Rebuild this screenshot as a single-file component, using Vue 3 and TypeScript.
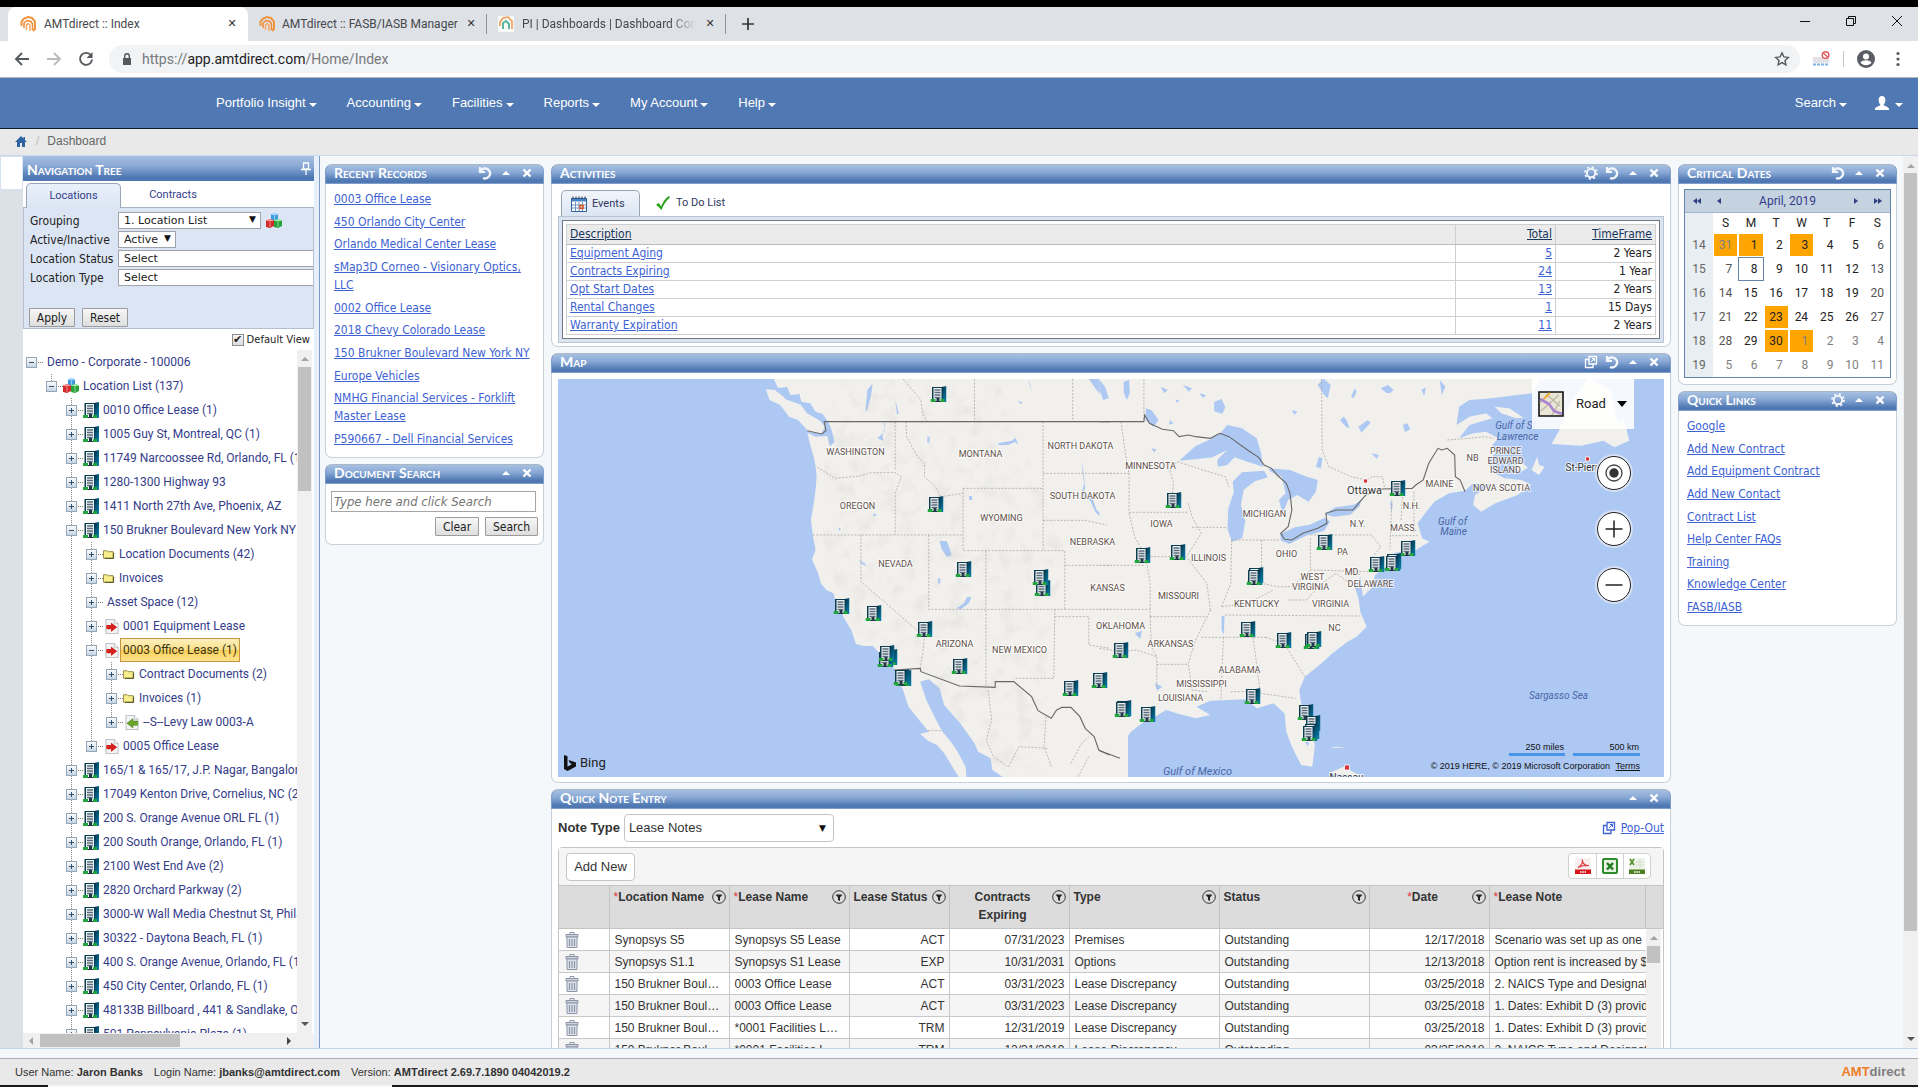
<script setup lang="ts">
import { ref } from 'vue'

interface TreeRow {
  level: number
  label: string
  open?: boolean
  icon?: 'building' | 'cubes' | 'folder' | 'lease-in' | 'lease-out'
  selected?: boolean
  last?: boolean
}

const topMenu = ['Portfolio Insight', 'Accounting', 'Facilities', 'Reports', 'My Account', 'Help']

const tree: TreeRow[] = [
  { level: 0, label: 'Demo - Corporate - 100006', open: true, last: true },
  { level: 1, label: 'Location List (137)', open: true, icon: 'cubes', last: true },
  { level: 2, label: '0010 Office Lease (1)', icon: 'building' },
  { level: 2, label: '1005 Guy St, Montreal, QC (1)', icon: 'building' },
  { level: 2, label: '11749 Narcoossee Rd, Orlando, FL (1)', icon: 'building' },
  { level: 2, label: '1280-1300 Highway 93', icon: 'building' },
  { level: 2, label: '1411 North 27th Ave, Phoenix, AZ', icon: 'building' },
  { level: 2, label: '150 Brukner Boulevard New York NY', open: true, icon: 'building' },
  { level: 3, label: 'Location Documents (42)', icon: 'folder' },
  { level: 3, label: 'Invoices', icon: 'folder' },
  { level: 3, label: 'Asset Space (12)' },
  { level: 3, label: '0001 Equipment Lease', icon: 'lease-in' },
  { level: 3, label: '0003 Office Lease (1)', open: true, icon: 'lease-in', selected: true },
  { level: 4, label: 'Contract Documents (2)', icon: 'folder' },
  { level: 4, label: 'Invoices (1)', icon: 'folder' },
  { level: 4, label: '--S--Levy Law 0003-A', icon: 'lease-out', last: true },
  { level: 3, label: '0005 Office Lease', icon: 'lease-in', last: true },
  { level: 2, label: '165/1 & 165/17, J.P. Nagar, Bangalore', icon: 'building' },
  { level: 2, label: '17049 Kenton Drive, Cornelius, NC (2)', icon: 'building' },
  { level: 2, label: '200 S. Orange Avenue ORL FL (1)', icon: 'building' },
  { level: 2, label: '200 South Orange, Orlando, FL (1)', icon: 'building' },
  { level: 2, label: '2100 West End Ave (2)', icon: 'building' },
  { level: 2, label: '2820 Orchard Parkway (2)', icon: 'building' },
  { level: 2, label: '3000-W Wall Media Chestnut St, Phila', icon: 'building' },
  { level: 2, label: '30322 - Daytona Beach, FL (1)', icon: 'building' },
  { level: 2, label: '400 S. Orange Avenue, Orlando, FL (1)', icon: 'building' },
  { level: 2, label: '450 City Center, Orlando, FL (1)', icon: 'building' },
  { level: 2, label: '48133B Billboard , 441 & Sandlake, Or', icon: 'building' },
  { level: 2, label: '501 Pennsylvania Plaza (1)', icon: 'building' },
]

const recentRecords = [
  '0003 Office Lease', '450 Orlando City Center', 'Orlando Medical Center Lease',
  'sMap3D Corneo - Visionary Optics, LLC', '0002 Office Lease', '2018 Chevy Colorado Lease',
  '150 Brukner Boulevard New York NY', 'Europe Vehicles',
  'NMHG Financial Services - Forklift Master Lease', 'P590667 - Dell Financial Services',
]

const quickLinks = [
  'Google', 'Add New Contract', 'Add Equipment Contract', 'Add New Contact', 'Contract List',
  'Help Center FAQs', 'Training', 'Knowledge Center', 'FASB/IASB',
]

const activities = [
  { name: 'Equipment Aging', total: 5, frame: '2 Years' },
  { name: 'Contracts Expiring', total: 24, frame: '1 Year' },
  { name: 'Opt Start Dates', total: 13, frame: '2 Years' },
  { name: 'Rental Changes', total: 1, frame: '15 Days' },
  { name: 'Warranty Expiration', total: 11, frame: '2 Years' },
]

const weekDays = ['S', 'M', 'T', 'W', 'T', 'F', 'S']
const due = ['0-0', '0-1', '0-3', '3-2', '4-2', '4-3']
const firstDay = new Date(2019, 2, 31)
const weeks = Array.from({ length: 6 }, (_, w) => ({
  number: 14 + w,
  days: Array.from({ length: 7 }, (_, d) => {
    const date = new Date(firstDay.getFullYear(), firstDay.getMonth(), firstDay.getDate() + w * 7 + d)
    return {
      day: date.getDate(),
      other: date.getMonth() !== 3,
      weekend: d === 0 || d === 6,
      due: due.includes(`${w}-${d}`),
      today: w === 1 && d === 1,
    }
  }),
}))

const noteColumns = [
  { title: 'Location Name', required: true, filter: true },
  { title: 'Lease Name', required: true, filter: true },
  { title: 'Lease Status', filter: true },
  { title: 'Contracts Expiring', filter: true, center: true },
  { title: 'Type', filter: true },
  { title: 'Status', filter: true },
  { title: 'Date', required: true, filter: true, center: true },
  { title: 'Lease Note', required: true },
]
const notes = [
  ['Synopsys S5', 'Synopsys S5 Lease', 'ACT', '07/31/2023', 'Premises', 'Outstanding', '12/17/2018', 'Scenario was set up as one'],
  ['Synopsys S1.1', 'Synopsys S1 Lease', 'EXP', '10/31/2031', 'Options', 'Outstanding', '12/13/2018', 'Option rent is increased by $'],
  ['150 Brukner Boulevard', '0003 Office Lease', 'ACT', '03/31/2023', 'Lease Discrepancy', 'Outstanding', '03/25/2018', '2. NAICS Type and Designat'],
  ['150 Brukner Boulevard', '0003 Office Lease', 'ACT', '03/31/2023', 'Lease Discrepancy', 'Outstanding', '03/25/2018', '1. Dates: Exhibit D (3) provid'],
  ['150 Brukner Boulevard', '*0001 Facilities Lease', 'TRM', '12/31/2019', 'Lease Discrepancy', 'Outstanding', '03/25/2018', '1. Dates: Exhibit D (3) provid'],
  ['150 Brukner Boulevard', '*0001 Facilities Lease', 'TRM', '12/31/2019', 'Lease Discrepancy', 'Outstanding', '03/25/2018', '2. NAICS Type and Designat'],
]

const stateLabels: [string, number, number][] = [
  ['WASHINGTON', 856, 455], ['MONTANA', 981, 457], ['NORTH DAKOTA', 1081, 449], ['MINNESOTA', 1151, 469],
  ['OREGON', 858, 509], ['WYOMING', 1002, 521], ['SOUTH DAKOTA', 1083, 499], ['NEBRASKA', 1093, 545],
  ['NEVADA', 896, 567], ['IOWA', 1162, 527], ['ILLINOIS', 1209, 561], ['MICHIGAN', 1265, 517],
  ['KANSAS', 1108, 591], ['MISSOURI', 1179, 599], ['OHIO', 1287, 557], ['PA', 1343, 555],
  ['WEST', 1313, 580], ['VIRGINIA', 1311, 590], ['KENTUCKY', 1257, 607], ['VIRGINIA', 1331, 607],
  ['ARIZONA', 955, 647], ['NEW MEXICO', 1020, 653], ['OKLAHOMA', 1121, 629], ['ARKANSAS', 1171, 647],
  ['NC', 1335, 631], ['ALABAMA', 1240, 673], ['MISSISSIPPI', 1202, 687], ['LOUISIANA', 1181, 701],
  ['N.Y.', 1358, 527], ['N.H.', 1412, 509], ['MASS.', 1404, 531], ['MD.', 1353, 575], ['DELAWARE', 1371, 587],
  ['MAINE', 1440, 487], ['NB', 1473, 461], ['PRINCE', 1506, 454], ['EDWARD', 1506, 464], ['ISLAND', 1506, 473],
  ['NOVA SCOTIA', 1502, 491],
]
const seaLabels: [string, number, number][] = [
  ['Gulf of St', 1516, 429], ['Lawrence', 1518, 440], ['Gulf of', 1453, 525], ['Maine', 1454, 535],
  ['Sargasso Sea', 1559, 699],
]
const pins: [number, number][] = [
  [939, 394], [936, 504], [964, 569], [1043, 588], [1041, 577], [842, 606], [874, 613], [925, 629],
  [890, 657], [886, 659], [887, 653], [904, 678], [902, 677], [960, 666], [1071, 688], [1100, 680], [1174, 500],
  [1143, 555], [1178, 552], [1256, 575], [1255, 577], [1325, 542], [1398, 488], [1408, 548], [1394, 561],
  [1393, 563], [1377, 564], [1248, 629], [1284, 640], [1312, 641], [1314, 639], [1121, 650], [1124, 708], [1123, 709],
  [1148, 714], [1253, 696], [1306, 712], [1313, 723], [1312, 731], [1310, 733],
]

const grouping = ref('1. Location List')
const active = ref('Active')
const locStatus = ref('Select')
const locType = ref('Select')
const defaultView = ref(true)
const noteType = ref('Lease Notes')
const query = ref('')
</script>

<template>
  <svg class="defs" aria-hidden="true">
    <defs>
      <linearGradient id="side" x1="0" x2="1" y1="0" y2="1"><stop offset="0" stop-color="#03293c" /><stop offset="1" stop-color="#0a86b4" /></linearGradient>
      <linearGradient id="cell" x1="0" x2="0" y1="0" y2="1"><stop offset="0" stop-color="#ffffff" /><stop offset="1" stop-color="#c4d3e2" /></linearGradient>
    </defs>
    <symbol id="building" viewBox="0 0 16 16">
      <path d="M1.500 1h10v15h-10z" fill="#0f3d50" /><path d="M11 1 16 0v16h-5z" fill="url(#side)" />
      <path d="M3 2h8v13H3z" fill="#eef2f5" />
      <path d="M4 4h6M4 6.500h6M4 9h6M4 11.500h6" stroke="#5b6d7b" stroke-width="1.300" />
      <path d="M6 12h3v4H6z" fill="#243746" />
      <path d="M0 13h5v3H0zM10 13h4v3h-4z" fill="#22a53c" />
    </symbol>
    <symbol id="cubes" viewBox="0 0 16 16">
      <path d="M5 1.500 8.500 0 12 1.500V7L8.500 8 5 7z" fill="#3d9be0" /><path d="m5 1.500 3.500 1L12 1.500 8.500 0z" fill="#a9dcff" />
      <path d="m0 7.500 4-1.500 4 1.500v5.500l-4 2-4-1z" fill="#d42a2a" /><path d="m0 7.500 4 1 4-1L4 6z" fill="#ff9c9c" />
      <path d="m8 7.500 4-1.500 4 1.500V13l-4 2-4-1z" fill="#25a53a" /><path d="m8 7.500 4 1 4-1L12 6z" fill="#a4efaa" />
      <path d="M8.500 3v4M4 9v5M12 9v5" stroke="#fff" stroke-opacity=".5" />
    </symbol>
    <symbol id="folder" viewBox="0 0 13 10">
      <path d="M.5 1.500h4l1 1H11v7H.5z" fill="#f7ee8c" stroke="#8d8434" /><path d="M11.500 3.500v6.300H2" fill="none" stroke="#4f4a1c" />
    </symbol>
    <symbol id="lease-in" viewBox="0 0 14 16">
      <path d="M.5.500h9l4 4v11H.5z" fill="#f4f4f6" stroke="#b9bcc4" /><path d="M9.500.500v4h4" fill="#fff" stroke="#b9bcc4" />
      <path d="M1 6.500h5V3.800l6.500 5-6.500 5V11H1z" fill="#d3221f" />
    </symbol>
    <symbol id="lease-out" viewBox="0 0 14 16">
      <path d="M.5.500h9l4 4v11H.5z" fill="#f4f4f6" stroke="#b9bcc4" /><path d="M9.500.500v4h4" fill="#fff" stroke="#b9bcc4" />
      <path d="M13 6.500H8V3.800l-6.500 5 6.500 5V11h5z" fill="#6aa62c" stroke="#4d8320" stroke-width=".6" />
    </symbol>
    <symbol id="undo" viewBox="0 0 14 14">
      <path d="M2 1v5h5" fill="none" stroke="#f3f6fb" stroke-width="2.200" /><path d="M3 4.500A5 5 0 1 1 5 12" fill="none" stroke="#f3f6fb" stroke-width="2.400" />
    </symbol>
    <symbol id="up" viewBox="0 0 14 14"><path d="M3 9 7 5l4 4z" fill="#fff" /></symbol>
    <symbol id="close" viewBox="0 0 14 14"><path d="m3.500 3.500 7 7m0-7-7 7" stroke="#fff" stroke-width="2.400" /></symbol>
    <symbol id="gear" viewBox="0 0 14 14">
      <circle cx="7" cy="7" r="4.200" fill="none" stroke="#f3f6fb" stroke-width="2" />
      <circle cx="7" cy="7" r="6" fill="none" stroke="#f3f6fb" stroke-width="1.800" stroke-dasharray="2.200 2.512" />
    </symbol>
    <symbol id="popout" viewBox="0 0 14 14">
      <path d="M5 1.500h7.500V9H5zM5 4.500H1.500v8H9V9" fill="none" stroke="currentColor" stroke-width="1.300" />
      <path d="m7 7 3.500-3.500M8 3.500h2.500V6" fill="none" stroke="currentColor" />
    </symbol>
    <symbol id="amt" viewBox="0 0 16 16">
      <path d="M1.500 10V5.500L4 2.500 8 1l4 1 3 3.500V13l-2 2" fill="none" stroke="#f0953f" stroke-width="2" />
      <path d="M4 12V7l3-2.500 4 1 1.500 2.500v6" fill="none" stroke="#ee8a33" stroke-width="1.500" />
      <path d="M6.500 14V9L8 7.500 10 9v6" fill="none" stroke="#f4a75e" stroke-width="1.500" />
    </symbol>
    <symbol id="trash" viewBox="0 0 14 16">
      <path d="M1 2.500h12V5H1z" fill="#cfd4de" stroke="#8c95a8" /><path d="M5 2.500V.500h4v2" fill="none" stroke="#8c95a8" />
      <path d="M2 5h10v10.500H2z" fill="#dde1e9" stroke="#8c95a8" /><path d="M4.500 7v7M7 7v7M9.500 7v7" stroke="#8c95a8" stroke-width="1.200" />
    </symbol>
    <symbol id="filter" viewBox="0 0 14 14">
      <circle cx="7" cy="7" r="6.300" fill="none" stroke="#333" /><path d="M3.500 4.500h7L8 7.500V11L6 10V7.500z" fill="#222" />
    </symbol>
  </svg>

  <div class="window">
    <div class="strip"></div>
    <div class="tabs">
      <div class="tab current">
        <svg class="i16"><use href="#amt" /></svg><span class="tab-title">AMTdirect :: Index</span><button class="tab-x" aria-label="Close tab">✕</button>
      </div>
      <div class="tab second">
        <svg class="i16"><use href="#amt" /></svg><span class="tab-title">AMTdirect :: FASB/IASB Manager</span><button class="tab-x" aria-label="Close tab">✕</button>
      </div>
      <div class="tab third">
        <svg class="i16 pale" viewBox="0 0 16 16"><path d="M2 10V6l3-4 5-1 4 4v8" fill="none" stroke="#ef9a52" stroke-width="1.600" /><path d="M5 13V7l3-2 3 3v5" fill="none" stroke="#5fb59b" stroke-width="2" /></svg>
        <span class="tab-title fade">PI | Dashboards | Dashboard Con</span><button class="tab-x" aria-label="Close tab">✕</button>
      </div>
      <button class="new-tab" aria-label="New tab"><svg viewBox="0 0 12 12"><path d="M6 0v12M0 6h12" stroke="#333" stroke-width="1.700" /></svg></button>
      <div class="win-buttons">
        <button aria-label="Minimise"><svg viewBox="0 0 12 12"><path d="M1 6.500h10" stroke="#111" /></svg></button>
        <button aria-label="Restore"><svg viewBox="0 0 12 12"><path d="M1.500 3.500h7v7h-7zM3.500 3V1.500h7v7H9" fill="none" stroke="#111" /></svg></button>
        <button aria-label="Close"><svg viewBox="0 0 12 12"><path d="m1 1 10 10m0-10L1 11" stroke="#111" /></svg></button>
      </div>
    </div>

    <div class="toolbar">
      <button aria-label="Back"><svg viewBox="0 0 16 16"><path d="M15 8H2M8 2 2 8l6 6" fill="none" stroke="#55585d" stroke-width="1.900" /></svg></button>
      <button aria-label="Forward"><svg viewBox="0 0 16 16"><path d="M1 8h13M8 2l6 6-6 6" fill="none" stroke="#b9bbbf" stroke-width="1.900" /></svg></button>
      <button aria-label="Reload"><svg viewBox="0 0 16 16"><path d="M13 4.500A6 6 0 1 0 14 8.500" fill="none" stroke="#55585d" stroke-width="1.900" /><path d="M14.500 1v6h-6z" fill="#55585d" /></svg></button>
      <div class="address">
        <svg class="lock" viewBox="0 0 10 13"><path d="M1 5h8v7H1z" fill="#55585d" /><path d="M2.700 5V3a2.300 2.300 0 0 1 4.600 0v2" fill="none" stroke="#55585d" stroke-width="1.400" /></svg>
        <span>https://<b>app.amtdirect.com</b>/Home/Index</span>
        <svg class="star" viewBox="0 0 16 16"><path d="m8 1.800 1.900 4.100 4.400.5-3.300 3 .9 4.500L8 11.600l-3.900 2.300.9-4.500-3.300-3 4.400-.5z" fill="none" stroke="#55585d" stroke-width="1.400" /></svg>
      </div>
      <svg class="ext" viewBox="0 0 18 16"><path d="M0 6h16v6H0z" fill="#e3e3e5" /><path d="M0 13.500h16" stroke="#7cb3ea" stroke-width="2" stroke-dasharray="3 1" /><circle cx="12.500" cy="4" r="3.300" fill="#fff" stroke="#dd5a5a" stroke-width="1.400" /><path d="m10.300 2 4.300 4" stroke="#dd5a5a" stroke-width="1.400" /></svg>
      <span class="tool-sep"></span>
      <svg class="avatar" viewBox="0 0 18 18"><circle cx="9" cy="9" r="9" fill="#5a5d63" /><circle cx="9" cy="6.500" r="3" fill="#fff" /><path d="M3.500 12.500c2-3 9-3 11 0-2 3.500-9 3.500-11 0z" fill="#fff" /></svg>
      <svg class="dots" viewBox="0 0 4 16"><circle cx="2" cy="2.500" r="1.600" fill="#55585d" /><circle cx="2" cy="8" r="1.600" fill="#55585d" /><circle cx="2" cy="13.500" r="1.600" fill="#55585d" /></svg>
    </div>

    <nav class="menu">
      <a v-for="m in topMenu" :key="m" href="#">{{ m }}<i class="caret"></i></a>
      <a href="#" class="push">Search<i class="caret"></i></a>
      <a href="#" aria-label="Account" class="user"><svg viewBox="0 0 14 14"><path d="M7 0c2.400 0 3.400 1.700 3.400 4S9.300 8 8.600 8.700c0 1.600 5.400 1.500 5.400 4.300v1H0v-1c0-2.800 5.400-2.700 5.400-4.300C4.700 8 3.600 6.300 3.600 4S4.600 0 7 0z" fill="#fff" /></svg><i class="caret"></i></a>
    </nav>

    <div class="crumbs">
      <a href="#" aria-label="Home"><svg viewBox="0 0 12 11"><path d="M6 0 0 6h2v5h3V7h2v4h3V6h2l-2-2V1H8.500v1.500z" fill="#2f64a3" /></svg></a>
      <span class="slash">/</span><span>Dashboard</span>
    </div>

    <main>
      <div class="rail"><div></div></div>
      <aside>
        <div class="aside-head"><h2>Navigation Tree</h2><button aria-label="Pin"><svg viewBox="0 0 10 14"><path d="M2.500 1h5v6h-5zM0 7.500h10M5 8v5" fill="none" stroke="#fff" stroke-width="1.300" /></svg></button></div>
        <div class="aside-tabs"><button class="on">Locations</button><button>Contracts</button></div>
        <form class="filters" @submit.prevent>
          <div class="frow"><label for="grp">Grouping</label><span class="sel w143"><select id="grp" v-model="grouping"><option>1. Location List</option></select></span><svg class="i16 cub"><use href="#cubes" /></svg></div>
          <div class="frow"><label for="act">Active/Inactive</label><span class="sel w58"><select id="act" v-model="active"><option>Active</option></select></span></div>
          <div class="frow"><label for="ls">Location Status</label><input id="ls" v-model="locStatus" /></div>
          <div class="frow"><label for="lt">Location Type</label><input id="lt" v-model="locType" /></div>
          <div class="fbtns"><button class="btn">Apply</button><button class="btn">Reset</button></div>
        </form>
        <label class="dview"><input v-model="defaultView" type="checkbox" />Default View</label>
        <div class="tree-area">
          <ul class="tree">
            <li v-for="(r, n) in tree" :key="n">
              <span v-for="l in r.level + 1" :key="l" class="cell" :class="{ guide: l - 1 >= 2 && !(l - 1 === r.level && r.last), half: l - 1 === r.level && r.last && r.level > 0 }">
                <svg v-if="l - 1 === r.level" class="toggle" viewBox="0 0 17 11"><rect x=".5" y=".5" width="10" height="10" fill="url(#cell)" stroke="#93a7b8" /><path :d="r.open ? 'M3 5.500h5' : 'M3 5.500h5M5.500 3v5'" stroke="#31506e" /><path d="M12 5.500h5" stroke="#777" stroke-dasharray="1 1" /></svg>
              </span>
              <svg v-if="r.icon" class="ticon" :class="r.icon"><use :href="'#' + r.icon" /></svg>
              <a href="#" :class="{ selected: r.selected }">{{ r.label }}</a>
            </li>
          </ul>
          <div class="vbar tree-v"><i class="arr up"></i><div class="thumb"></div><i class="arr down dark"></i></div>
        </div>
        <div class="hbar"><i class="arr left"></i><div class="thumb"></div><i class="arr right"></i></div>
      </aside>
      <div class="splitter"></div>

      <div class="board">
        <div class="col narrow">
          <section class="portlet">
            <header><h2>Recent Records</h2><button aria-label="Refresh"><svg><use href="#undo" /></svg></button><button aria-label="Collapse"><svg><use href="#up" /></svg></button><button aria-label="Close"><svg><use href="#close" /></svg></button></header>
            <ul class="links recent"><li v-for="t in recentRecords" :key="t"><a href="#">{{ t }}</a></li></ul>
          </section>
          <section class="portlet">
            <header><h2>Document Search</h2><button aria-label="Collapse"><svg><use href="#up" /></svg></button><button aria-label="Close"><svg><use href="#close" /></svg></button></header>
            <form class="docs" @submit.prevent>
              <input v-model="query" aria-label="Document search" placeholder="Type here and click Search" />
              <div><button class="btn">Clear</button><button class="btn wide">Search</button></div>
            </form>
          </section>
        </div>

        <div class="col wide-col">
          <section class="portlet">
            <header><h2>Activities</h2><button aria-label="Settings"><svg><use href="#gear" /></svg></button><button aria-label="Refresh"><svg><use href="#undo" /></svg></button><button aria-label="Collapse"><svg><use href="#up" /></svg></button><button aria-label="Close"><svg><use href="#close" /></svg></button></header>
            <div class="acts">
              <div class="act-tabs">
                <button class="on"><svg viewBox="0 0 16 16"><path d="M.5 2.500h15v13H.5z" fill="#fff" stroke="#2d5c99" /><path d="M1 3h14v2.500H1z" fill="#4b82c8" /><path d="M1 9h14M1 12h14M4.500 6v9M8 6v9M11.500 6v9" stroke="#6d94c4" /><path d="M2 .500v2M5 .500v2M8 .500v2M11 .500v2M14 .500v2" stroke="#333" /><path d="M9 9.500h3v3H9z" fill="none" stroke="#d9531e" stroke-width="1.500" /></svg>Events</button>
                <button><svg viewBox="0 0 16 16"><path d="M1 9.500 4 8l2 3.500Q9 4 14 1l1 1.500Q9.500 7 6.500 15z" fill="#2aa31c" /></svg>To Do List</button>
              </div>
              <div class="frame"><div class="inner">
                <table>
                  <thead><tr><th><a href="#">Description</a></th><th class="n"><a href="#">Total</a></th><th class="n"><a href="#">TimeFrame</a></th></tr></thead>
                  <tbody><tr v-for="a in activities" :key="a.name"><td><a href="#">{{ a.name }}</a></td><td class="n"><a href="#">{{ a.total }}</a></td><td class="n">{{ a.frame }}</td></tr></tbody>
                </table>
              </div></div>
            </div>
          </section>

          <section class="portlet">
            <header><h2>Map</h2><button aria-label="Pop out"><svg><use href="#popout" /></svg></button><button aria-label="Refresh"><svg><use href="#undo" /></svg></button><button aria-label="Collapse"><svg><use href="#up" /></svg></button><button aria-label="Close"><svg><use href="#close" /></svg></button></header>
            <div class="map">
              <svg class="canvas" viewBox="558 379 1107 398" preserveAspectRatio="xMidYMid slice">
                <filter id="relief" x="0" y="0" width="100%" height="100%"><feTurbulence type="fractalNoise" baseFrequency=".06" numOctaves="3" seed="4" /><feColorMatrix values="0 0 0 0 .45  0 0 0 0 .45  0 0 0 0 .42  1.200 0 0 0 -.58" /><feComposite in2="SourceGraphic" operator="in" /></filter>
                <g transform="translate(550 370) scale(.35714 .33333)">
                  <path fill="#f1f0ed" d="M625 20 640 55 665 50 675 75 700 72 705 95 730 100 745 125 765 132 780 155 790 180 798 215 785 230 778 198 745 200 722 188 730 225 740 262 745 290 748 320 745 360 740 400 732 450 738 500 745 540 735 568 752 610 760 640 775 660 795 670 800 690 815 715 825 745 845 780 858 822 880 828 905 828 925 850 948 880 965 895 975 930 990 960 1005 1010 1035 1050 1062 1085 1038 1092 1060 1112 1085 1125 1105 1150 1125 1185 1148 1225H1168L1165 1190 1140 1140 1120 1110 1100 1085 1080 1045 1055 990 1038 935 1062 928 1092 955 1105 1005 1150 1060 1190 1120 1200 1145 1235 1165 1240 1200 1275 1225H1620V20z" />
                  <path fill="#f1f0ed" d="m606 58 25 2 30 25 40 15 20 30 35 20 15 20-10 22-35-7-30-35-25-10-25-35-30-15z" />
                  <path d="M640 55 665 85 705 100 735 132 770 155" fill="none" stroke="#adc8f2" stroke-width="9" />
                  <g fill="#adc8f2"><path d="m1092 512 20 2 8 20 6 22-14 5-14-25zM1140 715l20-15 10-20 12 2-8 18-22 18zM1255 220l40-8 10-8 8 20-10-8-18 8-25 2zM1490 275l5 30 5 50-8 15 30 20 10 30 25 25 2 12-30-30-15-35-25-20 8-30-5-40zM890 60l15-20-5 40-12 45-3-5zM968 90l5 45 5-5zM1512 30l30 45 28 10V20h-60zM936 155l2 30-20 20 18 8-4-12 8-40zM1088 625h6v15h-6zM1058 200h6v18h-6zM905 430l12 4-8 6zM1340 30l10 32-4-20zM808 472l8 4-4 8zM865 570l16 8 8 12-16-10zM1175 378h8v12h-8zM1312 92l14 6-8 4z" /></g>
                </g>
                <g transform="translate(1100 370) scale(.36996 .33333)">
                  <path fill="#f1f0ed" d="M0 20V1225H35L42 1165 55 1130 85 1085 120 1055 150 1040 180 1020 215 1032 260 1045 300 1035 262 1010 300 992 350 990 395 988 425 1015 470 1000 500 1030 505 1085 520 1130 545 1185 575 1190 582 1130 575 1060 545 1000 540 960 555 920 600 880 630 850 670 815 695 800 722 770 705 725 700 685 690 650 705 620 712 680 735 655 745 615 775 590 780 560 800 548 855 540 892 515 872 505 860 460 880 430 905 395 945 370 988 362 1010 340 1060 345 1015 375 1010 405 1032 425 1070 400 1130 375 1168 345 1140 330 1095 325 1060 305 1050 270 1070 250 1062 225 1078 205 1045 185 1010 190 972 205 1000 165 1062 145 1045 130 1000 140 965 165 972 110 1000 90 1060 85 1130 75 1170 70 1195 20z" />
                  <path fill="#f1f0ed" d="m1068 110 40 5 38 28-20 2-40-15zM1168 300l15-40 5 25 15 5-15 25zM1120 290l20-15 18 18-18 12zM1222 222l20-40 30-80 50-80 60 40 20 100 15-20 15 70-40 20-30-20-60 15zM620 1135l20-5 30 2M620 1210l40-20 50 30z" />
                  <g fill="#adc8f2">
                    <path d="M215 272 260 228 300 208 328 188 345 165 385 175 425 205 437 250 442 290 400 275 365 262 345 285 320 290 318 270 345 240 305 262 260 268z" />
                    <path d="m360 335 25-28 60-5 10 20-35 12-30 25-8 45 12 50-8 50-28 12-12-40 2-60 15-50zM455 295l60 5 45 20 30 10-5 35-20 30-30-20-25 15-15 40-10-40 18-20-10-50-30-15zM488 492l40-20 40-8 40-20 15 10-15 28-50 15-45 25-22-10zM608 432l30-20 50-8 20-15-5 20-25 25-45 6z" />
                    <path d="m0 30 15 20 10 35-15 5L0 60zM65 35l15-5 2 40-8 20-8-20zM125 115l15 5 20 30-15 20-20-20zM310 95l20-8 10 25-8 20-22-8zM590 45l15-20 20 20-8 40-10-10zM650 150l10-10 8 10 8 25-10-5zM680 80l10-25 5 10-8 20zM760 55l20-10 15 15-10 10-10-2zM820 165l12-5 8 18-14 8zM585 290l8-30 10 5-5 30zM140 235l14 3-6 10zM225 45l25 10-8 10zM270 70l18 5-8 10zM165 50l20 10-10 10zM205 88l12 4-8 6zM190 150l10 10-12 4zM520 120l15 5-8 10zM700 170l25-20 8 8-25 30zM920 30l15 20-10 25zM870 60l12-8-4 25zM735 250l20 5-5 12zM330 740l8-5-2 60-6-15zM150 940l20 10-15 12zM95 790l20-8-5 25zM730 640l-12 50 2 30-6-20zM785 395l8 5-4 30zM555 1115l12 2-4 12z" />
                  </g>
                </g>
                <g filter="url(#relief)" opacity=".35"><path transform="translate(550 370) scale(.35714 .33333)" fill="#000" d="M800 20H1250L1450 560 1400 740 1380 1225H1275L1105 1000 1040 900 960 860 860 790 765 560 770 260z" /></g>
                <g fill="none" stroke="#b4b0ac" stroke-dasharray="2 1.500" stroke-width=".9">
                  <path vector-effect="non-scaling-stroke" transform="translate(550 370) scale(.35714 .33333)" d="M968 155V300M750 292l50 33 70-7 30-10h68l17 12-17 50v125M737 495h421M998 155l2 45 30 60 20 20v40l30 30 15 30 63-10M1158 355h224M1382 155v385M1158 355v187h285v176M1382 310h200M1382 451h118l60 14M1443 586h130M872 495v140l178 165-5 50-7 45M1062 495v223h510M1222 542v408M1415 718l-3 207h-112M1415 740h95v85l60 10M1190 27v128M1465 27v128M990 27l50 63 5 40 13 25M1228 960l10 90-15 60 20 50 40 30M1390 1040l-5 90 20 60M1285 1190l30-60 80 5M1060 1082h40M1460 1180l30-60 20-20M1480 1220l30-60" />
                  <path vector-effect="non-scaling-stroke" transform="translate(1100 370) scale(.36996 .33333)" d="M120 27v128M58 155l12 95 10 60v117M0 310h80M80 427h160M195 400l5-60-10-40 20-25 70 25 60 20 10 30M240 400l10 40 25 50-40 70 55 80 10 80M0 586h120M80 430l15 70 30 60 12 80v100M110 560h120M137 740h153M0 718h137M137 740l3 90 15 30v90M155 883h85M300 720l-40 90-20 70 10 80 40 5M275 802h175M340 735l370 3M335 802l-7 188M415 802l20 168 95 15M355 965h80M357 510l-2 130-25 70M357 510h133M438 510v130l42 10h40l50-50M570 505v95l160 5M570 495h165l25 35-20 30 10 40M790 390l-5 150M790 497h70M820 360l-5 90M850 365v125M600 27l2 213 18 50 60 30 40 10 20-10h25l5 30M940 210l60-5 40-5 25 5M450 802l50 20 55 98M330 710l70-10 70-40M510 690h50l40-50 40-30 60 50M250 472h95M0 835l60 10 40-5 55 20" />
                </g>
                <g fill="none" stroke="#6a6866" stroke-width="1.100">
                  <path vector-effect="non-scaling-stroke" transform="translate(550 370) scale(.35714 .33333)" d="M722 182l40 10 12-10-5-27H1570M965 900l73-5 2 10 108 43 100 4v-17h52l50 45 18 42 37 23 15-25 15-8h25l25 28 15 35 25 25 13 40 30 15" />
                  <path vector-effect="non-scaling-stroke" transform="translate(1100 370) scale(.36996 .33333)" d="M0 155h120l2-20 13 25 35 18 30 4 15 18 25-5 20 5 40 5 25-15 25 10 50 40 30 22 15 23 20 10 15 20 25 25 10 30 5 50-10 50-20 20 10 18 20 2 30-20 40-15 25-15-3-30 28-10h45l15-20 20-25 40-18 85-2 10-10 20-15 15-50 25-45 10 5 15-5 20 20 2 65 13 10 13 35M0 1142l30 12 25 11" />
                </g>
                <g class="st"><text v-for="(s, n) in stateLabels" :key="n" :x="s[1]" :y="s[2]">{{ s[0] }}</text></g>
                <g class="sea"><text v-for="s in seaLabels" :key="s[0]" :x="s[1]" :y="s[2]">{{ s[0] }}</text><text x="1198" y="775" class="big">Gulf of Mexico</text></g>
                <g fill="#d8343c" stroke="#fff" stroke-width=".8"><path d="M1364 479h4v4h-4zM1586 457h4v4h-4zM1345 765h5v5h-5z" /></g>
                <g class="city"><text x="1365" y="494">Ottawa</text><text x="1585" y="471" class="small">St-Pierre</text><text x="1347" y="781" class="small">Nassau</text></g>
                <use v-for="(p, n) in pins" :key="n" href="#building" :x="p[0] - 8" :y="p[1] - 8" width="16" height="16" />
              </svg>
              <button class="road"><svg viewBox="0 0 26 26"><path d="M1 1h24v24H1z" fill="#eae6d6" stroke="#111" stroke-width="1.600" /><path d="m3 20 18-16M8 3l14 12M14 24l8-14M2 12l8-9" stroke="#bdb8a4" stroke-width="1.400" /><path d="m6 8 6-6" stroke="#f0b13c" stroke-width="2" /><path d="m2 8 9 5 5 7 8 3" fill="none" stroke="#a983cf" stroke-width="2.600" /></svg>Road<i></i></button>
              <div class="zoomers">
                <button aria-label="Locate me"><svg viewBox="0 0 34 34"><circle cx="17" cy="17" r="8.500" fill="none" stroke="#444" stroke-width="1.400" /><circle cx="17" cy="17" r="5" fill="#333" /></svg></button>
                <button aria-label="Zoom in"><svg viewBox="0 0 34 34"><path d="M17 8v18M8 17h18" stroke="#222" stroke-width="1.600" /></svg></button>
                <button aria-label="Zoom out"><svg viewBox="0 0 34 34"><path d="M8 17h18" stroke="#222" stroke-width="1.600" /></svg></button>
              </div>
              <div class="bing"><svg viewBox="0 0 12 16"><path d="m0 0 3.500 1.200v10.500L8 9 5.800 8 4.500 5 12 7.600v3.800L3.500 16 0 14z" fill="#111" /></svg>Bing</div>
              <div class="legal"><div class="scales"><span class="mi">250 miles</span><span class="km">500 km</span></div><div>© 2019 HERE, © 2019 Microsoft Corporation <a href="#">Terms</a></div></div>
            </div>
          </section>

          <section class="portlet">
            <header><h2>Quick Note Entry</h2><button aria-label="Collapse"><svg><use href="#up" /></svg></button><button aria-label="Close"><svg><use href="#close" /></svg></button></header>
            <div class="notes">
              <div class="note-top">
                <label for="nt">Note Type</label>
                <span class="sel note-sel"><select id="nt" v-model="noteType"><option>Lease Notes</option></select></span>
                <a href="#" class="pop"><svg><use href="#popout" /></svg><span>Pop-Out</span></a>
              </div>
              <div class="grid">
                <div class="grid-bar">
                  <button class="add">Add New</button>
                  <div class="exports">
                    <button aria-label="Export to PDF"><svg viewBox="0 0 16 16"><path d="M0 0h16v16H0z" fill="#f6f0f0" /><path d="M0 11.500h16V16H0z" fill="#d8151b" /><path d="M3 9.500C7 7 8 4 7 1.500 8 6 11 8 14 7.500 10 7 6 8 3 9.500z" fill="none" stroke="#e0444a" stroke-width="1.200" /><path d="M5 14h6" stroke="#fff" stroke-dasharray="1.500 .8" stroke-width="1.500" /></svg></button>
                    <button aria-label="Export to Excel"><svg viewBox="0 0 16 16"><rect x="1" y="1" width="14" height="14" rx="1" fill="#e6f2df" stroke="#2f8a2c" stroke-width="2" /><path d="m5 5 6 6.500m0-6.500-6 6.500" stroke="#1e7a1e" stroke-width="2.400" /></svg></button>
                    <button aria-label="Export to CSV"><svg viewBox="0 0 16 16"><path d="M0 0h16v16H0z" fill="#eef3ea" /><path d="M0 11.500h16V16H0z" fill="#4d7f22" /><path d="m1 1 4 6m0-6L1 7" stroke="#4d8f22" stroke-width="1.500" /><path d="M7 4h8M7 7h8M11 1v10" stroke="#d5dfd0" /><path d="M5 14h6" stroke="#fff" stroke-dasharray="1.500 .8" stroke-width="1.500" /></svg></button>
                  </div>
                </div>
                <div class="grid-body">
                  <table>
                    <colgroup><col class="c50" /><col class="c120" /><col class="c120" /><col class="c100" /><col class="c120" /><col class="c150" /><col class="c150" /><col class="c120" /><col /></colgroup>
                    <thead><tr><th></th><th v-for="c in noteColumns" :key="c.title"><div :class="{ center: c.center }"><span><em v-if="c.required">*</em>{{ c.title }}</span><svg v-if="c.filter"><use href="#filter" /></svg></div></th></tr></thead>
                    <tbody><tr v-for="(row, n) in notes" :key="n"><td class="bin"><button aria-label="Delete note"><svg><use href="#trash" /></svg></button></td><td v-for="(v, k) in row" :key="k" :class="{ n: k === 2 || k === 3 || k === 6, clip: k === 7 }">{{ v }}</td></tr></tbody>
                  </table>
                  <div class="gside"><div class="ghead"></div><div class="vbar"><i class="arr up"></i><div class="thumb"></div></div></div>
                </div>
              </div>
            </div>
          </section>
        </div>

        <div class="col narrow">
          <section class="portlet">
            <header><h2>Critical Dates</h2><button aria-label="Refresh"><svg><use href="#undo" /></svg></button><button aria-label="Collapse"><svg><use href="#up" /></svg></button><button aria-label="Close"><svg><use href="#close" /></svg></button></header>
            <div class="cal">
              <div class="cal-head">
                <button aria-label="Previous year"><i></i><i></i></button><button class="month" aria-label="Previous month"><i></i></button><span>April, 2019</span><button class="fwd month" aria-label="Next month"><i></i></button><button class="fwd" aria-label="Next year"><i></i><i></i></button>
              </div>
              <table>
                <thead><tr><th class="wk"></th><th v-for="(d, n) in weekDays" :key="n">{{ d }}</th></tr></thead>
                <tbody><tr v-for="w in weeks" :key="w.number"><th class="wk">{{ w.number }}</th><td v-for="(d, n) in w.days" :key="n"><span :class="{ other: d.other, weekend: d.weekend, due: d.due, today: d.today }">{{ d.day }}</span></td></tr></tbody>
              </table>
            </div>
          </section>
          <section class="portlet">
            <header><h2>Quick Links</h2><button aria-label="Settings"><svg><use href="#gear" /></svg></button><button aria-label="Collapse"><svg><use href="#up" /></svg></button><button aria-label="Close"><svg><use href="#close" /></svg></button></header>
            <ul class="links quick"><li v-for="t in quickLinks" :key="t"><a href="#">{{ t }}</a></li></ul>
          </section>
        </div>
      </div>
      <div class="vbar page-v"><i class="arr up"></i><div class="thumb"></div><i class="arr down dark"></i></div>
    </main>
    <div class="gap"></div>
    <footer>
      <span>User Name: <b>Jaron Banks</b></span><span>Login Name: <b>jbanks@amtdirect.com</b></span><span>Version: <b>AMTdirect 2.69.7.1890 04042019.2</b></span>
      <b class="brand"><span>AMT</span>direct</b>
    </footer>
    <div class="taskbar"><div></div></div>
  </div>
</template>

<style>
html, body, #app { height: 100%; }
body { margin: 0; }
</style>

<style scoped>
* { box-sizing: border-box; }
button { font: inherit; color: inherit; border: 0; background: none; padding: 0; margin: 0; }
ul { list-style: none; margin: 0; padding: 0; }
svg { display: block; flex: none; }
.defs { position: absolute; width: 0; height: 0; }
.i16 { width: 16px; height: 16px; }

.window { height: 100vh; min-width: 1200px; display: flex; flex-direction: column; overflow: hidden; background: #f4f8fb; font: 12px/18px "DejaVu Sans Condensed", "DejaVu Sans", sans-serif; color: #222; }
.window > * { flex: none; }
.strip { height: 7px; background: #000; }

.tabs { height: 34px; background: #dee1e6; display: flex; align-items: stretch; padding-left: 8px; font: 12px/16px Roboto, sans-serif; color: #45484d; }
.tab { display: flex; align-items: center; gap: 8px; padding: 0 10px 0 12px; width: 239px; }
.tab.current { background: #fff; border-radius: 8px 8px 0 0; width: 240px; }
.tab.second, .tab.third { position: relative; padding-left: 11px; }
.tab.second { gap: 7px; }
.tab.second::after, .tab.third::after { content: ""; position: absolute; right: 0; top: 7px; width: 1px; height: 20px; background: #8e9196; }
.pale { background: #f7faf9; }
.tab-title { flex: 1; white-space: nowrap; overflow: hidden; }
.fade { mask-image: linear-gradient(90deg, #000 85%, transparent); }
.tab-x { width: 12px; font: 11px/16px "DejaVu Sans", sans-serif; color: #333; }
.new-tab { width: 44px; display: flex; align-items: center; justify-content: center; }
.new-tab svg { width: 12px; height: 12px; }
.win-buttons { margin-left: auto; display: flex; }
.win-buttons button { width: 46px; height: 28px; display: flex; align-items: center; justify-content: center; padding-left: 4px; }
.win-buttons svg { width: 12px; height: 12px; }

.toolbar { height: 37px; background: #fff; border-bottom: 1px solid #b4b7bc; display: flex; align-items: center; padding: 0 18px 0 6px; }
.toolbar > button { width: 32px; height: 32px; display: flex; align-items: center; justify-content: center; }
.toolbar > button svg, .star { width: 16px; height: 16px; }
.address { flex: 1; height: 28px; margin-left: 7px; border-radius: 14px; background: #f1f3f4; display: flex; align-items: center; padding: 0 10px 0 13px; font: 14px/20px Roboto, sans-serif; color: #75797e; }
.address b { font-weight: 400; color: #202124; }
.address > span { flex: 1; margin-left: 10px; }
.lock { width: 10px; height: 13px; }
.ext { width: 18px; height: 16px; margin-left: 13px; }
.tool-sep { width: 1px; height: 16px; background: #c5c7ca; margin: 0 13px 0 12px; }
.avatar { width: 18px; height: 18px; }
.dots { width: 4px; height: 16px; margin-left: 21px; }

.menu { height: 51px; background: #5079b3; border-bottom: 1px solid #0d1a2b; display: flex; align-items: center; padding-left: 201px; font: 13px/18px "Liberation Sans", Arial, sans-serif; }
.menu a { color: #fff; text-decoration: none; display: flex; align-items: center; padding: 0 15px; }
.caret { margin-left: 3px; margin-top: 3px; border: 4px solid transparent; border-top-color: #fff; border-bottom: 0; }
.menu .push { margin-left: auto; }
.menu .user { padding-left: 13px; }
.menu .user svg { width: 14px; height: 14px; margin-right: 3px; }

.crumbs { height: 27px; background: #e9e9e9; border-bottom: 1px solid #c9d7e6; display: flex; align-items: center; padding: 0 0 2px 15px; font: 12px/18px "Liberation Sans", Arial, sans-serif; color: #666; }
.crumbs svg { width: 12px; height: 11px; }
.slash { color: #bbb; margin: 0 8px 0 9px; }

main { flex: 1 !important; min-height: 0; display: flex; overflow: hidden; }
.rail { width: 23px; background: #dce0e7; flex: none; }
.rail div { height: 34px; background: #fff; border: 1px solid #d5e2f2; }
aside { width: 291px; flex: none; background: #fff; display: flex; flex-direction: column; overflow: hidden; }
aside > * { flex: none; }
.aside-head, .portlet header { background: linear-gradient(#a6c0e0, #8aa9d6 40%, #5079b3 85%, #4f78b2); color: #fff; display: flex; align-items: center; }
.aside-head { height: 25px; padding: 0 3px 0 4px; }
.aside-head h2 { padding-top: 2px; }
.aside-head svg { width: 10px; height: 14px; }
h2 { margin: 0; flex: 1; font: bold small-caps 14px/16px Lato, sans-serif; }
.aside-tabs { height: 27px; display: flex; padding: 2px 0 0 3px; font: 11px/16px Roboto, sans-serif; color: #343c8a; border-bottom: 1px solid #a9b4c2; }
.aside-tabs button { width: 104px; }
.aside-tabs .on { width: 95px; border: 1px solid #99a4b4; border-bottom: 0; border-radius: 5px 5px 0 0; background: linear-gradient(#e9f1fa, #dbe5f3); margin-bottom: -1px; }
.filters { height: 121px; background: #dbe5f3; border: 1px solid #b5c0cf; border-top: 0; padding: 4px 0 0 6px; display: flex; flex-direction: column; gap: 2px; }
.frow { display: flex; align-items: center; height: 17px; }
.frow label { width: 88px; white-space: nowrap; }
.sel { position: relative; display: block; }
.sel select, .frow input { width: 100%; height: 17px; appearance: none; background: #fff; border: 1px solid #a0a4aa; border-radius: 0; padding: 0 5px; margin: 0; font: 11px/15px "DejaVu Sans", sans-serif; color: #222; display: block; }
.frow input { flex: 1; width: auto; min-width: 0; border-right: 0; }
.sel::after { content: "▼"; position: absolute; right: 5px; top: 0; font: 9px/15px "DejaVu Sans", sans-serif; color: #111; pointer-events: none; }
.w143 { width: 143px; } .w58 { width: 58px; }
.cub { margin-left: 5px; }
.fbtns { display: flex; gap: 7px; margin: auto 0 0 -1px; padding-bottom: 1px; }
.btn { width: 46px; height: 19px; border: 1px solid #9b9b9b; border-radius: 1px; background: linear-gradient(#f7f7f7, #dedede); line-height: 16px; }
.dview { height: 21px; display: flex; align-items: center; justify-content: flex-end; gap: 3px; padding-right: 4px; font: 10px/16px "DejaVu Sans", sans-serif; }
.dview input { appearance: none; width: 12px; height: 12px; margin: 0; border: 1px solid #8d8d8d; background: linear-gradient(#f4f4f4, #ddd); display: grid; place-items: center; }
.dview input:checked::after { content: "✔"; font: 11px/10px "DejaVu Sans", sans-serif; color: #222; }
.tree-area { flex: 1 !important; min-height: 0; display: flex; }
.tree { flex: 1; min-width: 0; overflow: hidden; font: 12px/18px Roboto, sans-serif; }
.tree li { height: 24px; display: flex; align-items: center; white-space: nowrap; }
.cell { width: 20px; height: 24px; flex: none; display: flex; align-items: center; padding-left: 3px; background: no-repeat 8px 0 / 1px 24px; }
.guide { background-image: repeating-linear-gradient(#888 0 1px, transparent 1px 2px); }
.half { background-image: repeating-linear-gradient(#888 0 1px, transparent 1px 2px); background-size: 1px 12px; }
.toggle { width: 17px; height: 11px; }
.ticon { width: 16px; height: 16px; }
.ticon.folder { width: 12px; height: 10px; }
.ticon.lease-in, .ticon.lease-out { width: 14px; height: 15px; margin-left: 2px; }
.tree a { color: #343c8a; text-decoration: none; margin-left: 4px; }
.tree a.selected { color: #3b3410; border: 1px solid #c9953c; background: linear-gradient(#fdf0bd, #fbe08a 50%, #f9cf57 51%, #fde38e); padding: 2px; margin-left: 1px; }

.vbar { width: 15px; background: #f0f0f0; display: flex; flex-direction: column; align-items: center; padding: 7px 1px; flex: none; }
.vbar .thumb { width: 13px; background: #c1c1c1; margin-top: 6px; }
.arr { border: 4px solid transparent; flex: none; }
.arr.up { border-bottom: 4px solid #a3a3a3; border-top: 0; }
.arr.down { border-top: 4px solid #555; border-bottom: 0; margin-top: auto; }
.arr.left { border-right: 4px solid #a3a3a3; border-left: 0; }
.arr.right { border-left: 4px solid #444; border-right: 0; margin-left: auto; }
.tree-v { margin-right: 2px; } .tree-v .thumb { height: 124px; }
.page-v { padding-top: 8px; } .page-v .thumb { height: 758px; margin-top: 5px; }
.hbar { height: 15px; background: #f0f0f0; display: flex; align-items: center; padding: 0 23px 0 6px; }
.hbar .thumb { width: 140px; height: 13px; background: #c1c1c1; margin-left: 7px; }
.splitter { width: 6px; flex: none; background: #e6effa; border-right: 1px solid #7d9bc8; }

.board { flex: 1; min-width: 0; display: flex; gap: 7px; padding: 8px 6px 0 5px; overflow: hidden; }
.col { display: flex; flex-direction: column; gap: 6px; }
.narrow { width: 219px; flex: none; }
.wide-col { flex: 1; min-width: 0; }
.portlet { border: 1px solid #c8d0da; border-top: 0; border-radius: 7px; background: #fff; flex: none; }
.portlet header { height: 20px; margin: 0 -1px; border-radius: 7px 7px 0 0; border: 1px solid #7f9dcb; border-top-color: #a9b7c6; padding: 0 6px 2px 8px; }
.portlet header button { width: 21px; height: 16px; display: flex; align-items: center; justify-content: center; color: #fff; }
.portlet header svg { width: 14px; height: 14px; }

a { color: #3c62d4; }
.links { display: flex; flex-direction: column; justify-content: space-between; }
.recent { height: 273px; padding: 6px 8px 9px 8px; }
.quick { height: 214px; padding: 6px 10px 9px 8px; }
.docs { height: 60px; padding: 7px 5px 0; }
.docs input { width: 205px; height: 21px; border: 1px solid #a6a6a6; padding: 0 2px; font: italic 13px/18px "DejaVu Sans Condensed", "DejaVu Sans", sans-serif; display: block; }
.docs input::placeholder { color: #757575; opacity: 1; }
.docs div { display: flex; justify-content: flex-end; gap: 6px; margin-top: 5px; }
.docs .btn { width: 44px; } .docs .btn.wide { width: 53px; }

.acts { padding: 6px 6px 3px; }
.act-tabs { height: 26px; display: flex; padding-left: 3px; font: 11px/16px Roboto, sans-serif; color: #30365f; }
.act-tabs button { display: flex; align-items: center; gap: 5px; padding: 0 15px; }
.act-tabs .on { width: 79px; gap: 5px; padding: 0 0 0 9px; border: 1px solid #99a4b4; border-bottom: 0; border-radius: 5px 5px 0 0; background: linear-gradient(#f2f6fb, #dbe5f3); }
.act-tabs svg { width: 16px; height: 16px; }
.frame { background: #dbe4f1; border: 1px solid #b9c3d2; padding: 3px; }
.inner { border: 1px solid #72777f; background: #fff; padding: 3px; }
.frame table { width: 100%; border-collapse: collapse; }
.frame th, .frame td { border: 1px solid #cfcfcf; text-align: left; font-weight: 400; padding: 0 3px; height: 18px; line-height: 17px; }
.frame th { background: #ebebeb; height: 20px; border-bottom-color: #bbb; }
.frame th a { color: #17375e; }
.frame .n { text-align: right; width: 100px; }

.map { position: relative; height: 398px; margin: 6px 6px 5px; background: #adc8f2; overflow: hidden; }
.canvas { width: 100%; height: 100%; }
.st text { font: 9px Roboto, sans-serif; fill: #5f504a; text-anchor: middle; paint-order: stroke; stroke: #fff; stroke-opacity: .7; stroke-width: 2px; }
.sea text { font: italic 10px Roboto, sans-serif; fill: #4a66a8; text-anchor: middle; }
.sea .big { font-size: 11px; }
.city text { font: 11px Roboto, sans-serif; fill: #333; text-anchor: middle; paint-order: stroke; stroke: #fff; stroke-opacity: .7; stroke-width: 2px; }
.city .small { font-size: 10px; }
.road { position: absolute; right: 30px; top: 0; width: 102px; height: 50px; background: rgba(255, 255, 255, .88); display: flex; align-items: center; padding: 0 7px 0 6px; font: 13px/18px Roboto, sans-serif; color: #222; }
.road svg { width: 26px; height: 26px; margin-right: 12px; }
.road i { margin-left: auto; border: 5px solid transparent; border-top: 6px solid #000; border-bottom: 0; }
.zoomers { position: absolute; right: 33px; top: 77px; display: flex; flex-direction: column; gap: 22px; }
.zoomers button { width: 34px; height: 34px; border-radius: 50%; background: #fff; border: 1px solid #222; box-shadow: 0 0 0 2px #d5e0f2; }
.zoomers svg { width: 32px; height: 32px; }
.bing { position: absolute; left: 6px; bottom: 5px; display: flex; align-items: center; gap: 4px; font: 13px/18px Roboto, sans-serif; color: #222; }
.bing svg { width: 12px; height: 16px; }
.legal { position: absolute; right: 24px; bottom: 4px; font: 9px/13px "Liberation Sans", Arial, sans-serif; color: #111; text-align: right; }
.legal a { color: #111; margin-left: 3px; }
.scales { display: flex; justify-content: flex-end; gap: 8px; margin-bottom: 4px; }
.scales span { border-bottom: 3px solid #4b95e9; padding-right: 1px; line-height: 11px; }
.mi { width: 56px; } .km { width: 67px; }

.notes { padding: 5px 6px 6px; font: 12px/18px "Liberation Sans", Arial, sans-serif; color: #333; }
.note-top { display: flex; align-items: center; height: 27px; font-size: 13px; }
.note-top label { font-weight: 700; margin-right: 4px; }
.note-sel { width: 210px; }
.note-sel select { height: 28px; border-color: #c5c5c5; border-radius: 4px; font: 13px/18px "Liberation Sans", Arial, sans-serif; padding: 0 4px; color: #333; }
.note-sel::after { right: 8px; line-height: 28px; }
.pop { margin-left: auto; display: flex; align-items: center; gap: 5px; font: 12px/18px "DejaVu Sans Condensed", "DejaVu Sans", sans-serif; text-decoration: none; }
.pop span { text-decoration: underline; }
.pop svg { width: 14px; height: 14px; }
.grid { margin-top: 6px; border: 1px solid #c5c5c5; border-radius: 4px; }
.grid-bar { height: 37px; background: #f5f5f5; padding: 5px 12px 0 7px; display: flex; justify-content: space-between; }
.add { width: 69px; height: 28px; border: 1px solid #c5c5c5; border-radius: 4px; background: #fff; font-size: 13px; }
.exports { display: flex; height: 26px; border: 1px solid #d0d0d0; border-radius: 4px; background: #fff; }
.exports button { width: 27px; display: grid; place-items: center; }
.exports button + button { border-left: 1px solid #d0d0d0; }
.exports svg { width: 16px; height: 16px; }
.grid-body { display: flex; }
.grid table { flex: 1; min-width: 0; width: 0; table-layout: fixed; border-collapse: collapse; }
.c50 { width: 50px; } .c100 { width: 100px; } .c120 { width: 120px; } .c150 { width: 150px; }
.grid th { height: 43px; background: #dcdcdc; border: 1px solid #c5c5c5; border-width: 1px 1px 1px 0; padding: 2px 3px 0 4px; vertical-align: top; text-align: left; }
.grid th div { display: flex; justify-content: space-between; white-space: nowrap; }
.grid th .center span { flex: 1; white-space: normal; text-align: center; padding: 0 12px; }
.grid th svg { width: 14px; height: 14px; margin-top: 2px; }
em { color: #e0313c; font-style: normal; font-weight: 400; }
.grid td { height: 22px; border: 1px solid #c8c8c8; border-width: 0 1px 1px 0; padding: 0 4px 0 5px; white-space: nowrap; overflow: hidden; text-overflow: ellipsis; line-height: 18px; }
.grid tr:nth-child(even) td { background: #f5f5f5; }
.grid td.n { text-align: right; }
.grid td.clip { text-overflow: clip; padding-right: 0; border-right: 0; }
.grid td.bin { padding-left: 6px; }
.bin svg { width: 14px; height: 16px; } .bin button { display: block; }
.gside { width: 17px; display: flex; flex-direction: column; }
.ghead { height: 44px; background: #dcdcdc; border: 1px solid #c5c5c5; border-width: 1px 0; }
.gside .vbar { flex: 1; } .gside .thumb { height: 17px; margin-top: 6px; }

.cal { margin: 5px 5px 6px; border: 1px solid #6484ac; height: 189px; font: 12px/18px Roboto, sans-serif; color: #222; }
.cal-head { height: 23px; background: #c5d3e0; border-bottom: 1px solid #9fb4c9; display: flex; align-items: center; color: #343c8a; }
.cal-head span { flex: 1; text-align: center; }
.cal-head button { width: 24px; display: flex; justify-content: center; }
.cal-head .month { width: 20px; }
.cal-head i { border: 3px solid transparent; border-right: 4px solid #2f3f7d; border-left: 0; }
.cal-head .fwd i { border-left: 4px solid #2f3f7d; border-right: 0; }
.cal table { width: 100%; border-collapse: collapse; table-layout: fixed; }
.cal th, .cal td { padding: 0; height: 24px; font-weight: 400; text-align: center; }
.cal thead th { height: 20px; }
.cal th.wk { width: 28px; background: #e9eef2; color: #666; }
.cal td span { display: block; margin: 1px; height: 22px; line-height: 22px; text-align: right; padding-right: 5px; }
.cal td .weekend { color: #555; } .cal td .other { color: #808080; }
.cal td .due { background: #ffa500; }
.cal td .today { border: 1px solid #6484ac; margin: 0; height: 24px; }

.gap { height: 10px; border-top: 1px solid #c5d5ea; }
footer { height: 27px; border-top: 1px solid #a9adb2; background: #e9e9e9; display: flex; align-items: center; gap: 11px; padding: 0 13px 1px 15px; font: 11px/16px "Liberation Sans", Arial, sans-serif; color: #333; }
.brand { margin-left: auto; font-size: 13px; color: #7d7d80; } .brand span { color: #f07d28; }
.taskbar { height: 2px; background: #1a1a1c; padding-left: 48px; }
.taskbar div { height: 2px; width: 344px; background: #f6f6f6; }
</style>
